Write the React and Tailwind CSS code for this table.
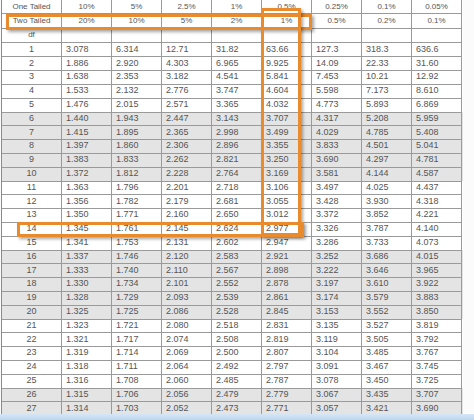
import React from 'react';

// t-distribution critical values table, with highlighted row/column
const oneTailed = ['10%', '5%', '2.5%', '1%', '0.5%', '0.25%', '0.1%', '0.05%'];
const twoTailed = ['20%', '10%', '5%', '2%', '1%', '0.5%', '0.2%', '0.1%'];

const rows = [
  ['3.078', '6.314', '12.71', '31.82', '63.66', '127.3', '318.3', '636.6'],
  ['1.886', '2.920', '4.303', '6.965', '9.925', '14.09', '22.33', '31.60'],
  ['1.638', '2.353', '3.182', '4.541', '5.841', '7.453', '10.21', '12.92'],
  ['1.533', '2.132', '2.776', '3.747', '4.604', '5.598', '7.173', '8.610'],
  ['1.476', '2.015', '2.571', '3.365', '4.032', '4.773', '5.893', '6.869'],
  ['1.440', '1.943', '2.447', '3.143', '3.707', '4.317', '5.208', '5.959'],
  ['1.415', '1.895', '2.365', '2.998', '3.499', '4.029', '4.785', '5.408'],
  ['1.397', '1.860', '2.306', '2.896', '3.355', '3.833', '4.501', '5.041'],
  ['1.383', '1.833', '2.262', '2.821', '3.250', '3.690', '4.297', '4.781'],
  ['1.372', '1.812', '2.228', '2.764', '3.169', '3.581', '4.144', '4.587'],
  ['1.363', '1.796', '2.201', '2.718', '3.106', '3.497', '4.025', '4.437'],
  ['1.356', '1.782', '2.179', '2.681', '3.055', '3.428', '3.930', '4.318'],
  ['1.350', '1.771', '2.160', '2.650', '3.012', '3.372', '3.852', '4.221'],
  ['1.345', '1.761', '2.145', '2.624', '2.977', '3.326', '3.787', '4.140'],
  ['1.341', '1.753', '2.131', '2.602', '2.947', '3.286', '3.733', '4.073'],
  ['1.337', '1.746', '2.120', '2.583', '2.921', '3.252', '3.686', '4.015'],
  ['1.333', '1.740', '2.110', '2.567', '2.898', '3.222', '3.646', '3.965'],
  ['1.330', '1.734', '2.101', '2.552', '2.878', '3.197', '3.610', '3.922'],
  ['1.328', '1.729', '2.093', '2.539', '2.861', '3.174', '3.579', '3.883'],
  ['1.325', '1.725', '2.086', '2.528', '2.845', '3.153', '3.552', '3.850'],
  ['1.323', '1.721', '2.080', '2.518', '2.831', '3.135', '3.527', '3.819'],
  ['1.321', '1.717', '2.074', '2.508', '2.819', '3.119', '3.505', '3.792'],
  ['1.319', '1.714', '2.069', '2.500', '2.807', '3.104', '3.485', '3.767'],
  ['1.318', '1.711', '2.064', '2.492', '2.797', '3.091', '3.467', '3.745'],
  ['1.316', '1.708', '2.060', '2.485', '2.787', '3.078', '3.450', '3.725'],
  ['1.315', '1.706', '2.056', '2.479', '2.779', '3.067', '3.435', '3.707'],
  ['1.314', '1.703', '2.052', '2.473', '2.771', '3.057', '3.421', '3.690'],
];

// blocks of five rows alternate white / grey
const isShaded = (df) => Math.floor((df - 1) / 5) % 2 === 1;

function HeaderRow({ label, values }) {
  return (
    <div className="grid grid-cols-[60px_repeat(8,50px)] h-[14.3px] text-[8px]">
      <div className="flex items-center justify-center border-r border-b border-[#9a9a9a]">{label}</div>
      {values.map((v, i) => (
        <div key={i} className="flex items-center justify-center border-r border-b border-[#9a9a9a]">
          {v}
        </div>
      ))}
    </div>
  );
}

function App() {
  return (
    <div className="relative w-[474px] h-[420px] overflow-hidden bg-[#fbfbfb] flex flex-col font-['Liberation_Sans',Arial,sans-serif] text-[9px] text-[#555]">
      <div className="h-[414px] overflow-hidden pl-[1px]">
        <div className="w-[462px] border-l border-[#8a8a8a] bg-white">
          <HeaderRow label="One Tailed" values={oneTailed} />
          <HeaderRow label="Two Tailed" values={twoTailed} />
          <HeaderRow label="df" values={['', '', '', '', '', '', '', '']} />

          {rows.map((vals, idx) => {
            const df = idx + 1;
            return (
              <div
                key={df}
                className={`grid grid-cols-[60px_repeat(8,50px)] h-[13.8px] ${isShaded(df) ? 'bg-[#e4e4e4]' : 'bg-white'}`}
              >
                <div className="flex items-center justify-center border-r border-b border-[#9a9a9a]">{df}</div>
                {vals.map((v, i) => (
                  <div key={i} className="flex items-center pl-1 border-r border-b border-[#9a9a9a]">
                    {v}
                  </div>
                ))}
              </div>
            );
          })}
        </div>
      </div>

      {/* taskbar strip at the bottom */}
      <div className="flex-1 bg-gradient-to-b from-[#d6e7f5] to-[#bcd6ee]" />

      {/* orange highlight boxes */}
      <div className="absolute left-[6px] top-[14px] w-[306px] h-[16px] border-[3px] border-[#e98a2c] shadow-[2px_2px_3px_rgba(0,0,0,0.35)]" />
      <div className="absolute left-[261px] top-[8px] w-[40px] h-[228px] border-[3px] border-[#e98a2c] shadow-[2px_2px_3px_rgba(0,0,0,0.35)]" />
      <div className="absolute left-[17px] top-[222px] w-[287px] h-[15px] border-[3px] border-[#e98a2c] shadow-[2px_2px_3px_rgba(0,0,0,0.35)]" />
    </div>
  );
}

export default App;
